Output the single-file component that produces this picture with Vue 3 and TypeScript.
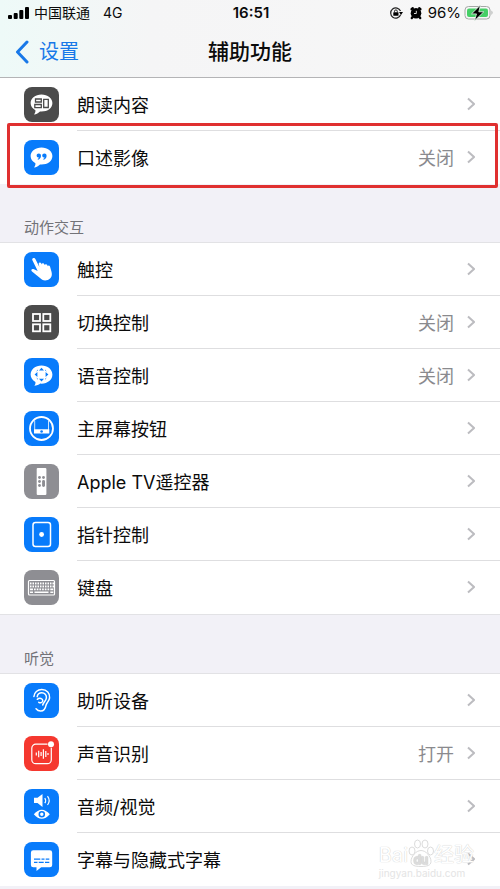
<script setup lang="ts">
type IconName =
  | 'speech' | 'quote' | 'touch' | 'switch' | 'voice' | 'home' | 'remote'
  | 'pointer' | 'keyboard' | 'ear' | 'sound' | 'av' | 'caption'

interface Item {
  label: string
  icon: IconName
  tone: 'blue' | 'dark' | 'gray' | 'red'
  value?: string
  marked?: boolean
}

interface Group {
  title?: string
  items: Item[]
}

const groups: Group[] = [
  {
    items: [
      { label: '朗读内容', icon: 'speech', tone: 'dark' },
      { label: '口述影像', icon: 'quote', tone: 'blue', value: '关闭', marked: true },
    ],
  },
  {
    title: '动作交互',
    items: [
      { label: '触控', icon: 'touch', tone: 'blue' },
      { label: '切换控制', icon: 'switch', tone: 'dark', value: '关闭' },
      { label: '语音控制', icon: 'voice', tone: 'blue', value: '关闭' },
      { label: '主屏幕按钮', icon: 'home', tone: 'blue' },
      { label: 'Apple TV遥控器', icon: 'remote', tone: 'gray' },
      { label: '指针控制', icon: 'pointer', tone: 'blue' },
      { label: '键盘', icon: 'keyboard', tone: 'gray' },
    ],
  },
  {
    title: '听觉',
    items: [
      { label: '助听设备', icon: 'ear', tone: 'blue' },
      { label: '声音识别', icon: 'sound', tone: 'red', value: '打开' },
      { label: '音频/视觉', icon: 'av', tone: 'blue' },
      { label: '字幕与隐藏式字幕', icon: 'caption', tone: 'blue' },
    ],
  },
]

const keyColumns: number[] = [6, 8.5, 11, 13.5, 16, 18.5, 21, 23.5, 26, 28.5]
</script>

<template>
  <div class="screen">
    <header class="top">
      <div class="status">
        <div class="status-side">
          <svg class="signal" viewBox="0 0 22 14" aria-hidden="true">
            <rect x="0" y="9" width="4" height="4" rx="1" />
            <rect x="5.700" y="7" width="4" height="6" rx="1" />
            <rect x="11.300" y="4" width="4" height="9" rx="1" />
            <rect x="17" y="1" width="4" height="12" rx="1" />
          </svg>
          <span class="carrier">中国联通</span>
          <span>4G</span>
        </div>
        <time class="clock">16:51</time>
        <div class="status-side status-right">
          <svg class="lock" viewBox="0 0 14 14" aria-hidden="true">
            <path d="M11.600 8.800A5.100 5.100 0 1 1 11.500 5" fill="none" stroke="#222" stroke-width="1.200" />
            <path d="M10 6h4L12 8.900z" />
            <rect x="4.300" y="6.300" width="5.200" height="3.500" rx=".5" />
            <path d="M5.500 6.500V5.300a1.400 1.400 0 0 1 2.800 0v1.200" fill="none" stroke="#222" stroke-width="1" />
          </svg>
          <svg class="alarm" viewBox="0 0 14 14" aria-hidden="true">
            <circle cx="7" cy="7.200" r="5.300" />
            <path d="M2.600 3.200 3.800 2.200M11.400 3.200 10.200 2.200M3.600 11l-.8 1M10.400 11l.8 1" stroke="#000" stroke-width="2.400" stroke-linecap="round" />
            <path d="M7.300 4.800v2.700H5" fill="none" stroke="#d8d8d8" stroke-width="1" />
          </svg>
          <span class="percent">96%</span>
          <svg class="battery" viewBox="0 0 30 16" aria-hidden="true">
            <rect x="1" y="1.500" width="25" height="12.500" rx="3.500" fill="none" stroke="#a5a8a6" />
            <rect x="3" y="3.500" width="21" height="8.500" rx="2" fill="#45cf66" />
            <path d="M27.500 5.500q2 2 0 4.500z" fill="#a5a8a6" />
            <path d="M16.500 0 7.500 8.900h5L10.500 15.800 19.800 6.800h-5z" fill="#000" stroke="#e9f7ec" stroke-width=".8" />
          </svg>
        </div>
      </div>
      <nav class="nav">
        <a class="back" href="#">
          <svg viewBox="0 0 14 24" aria-hidden="true"><path d="M12 2 2.500 12 12 22" /></svg>
          <span>设置</span>
        </a>
        <h1>辅助功能</h1>
      </nav>
    </header>

    <main>
      <section v-for="(group, g) in groups" :key="g" class="section">
        <h2 v-if="group.title">{{ group.title }}</h2>
        <ul>
          <li v-for="item in group.items" :key="item.label" :class="{ marked: item.marked }">
            <a class="row" href="#">
              <svg class="icon" :class="item.tone" viewBox="0 0 35 35" aria-hidden="true">
                <g v-if="item.icon === 'speech'">
                  <path class="fill" d="M17.500 7.500c6.200 0 10.900 3.600 10.900 8.600s-4.700 8.500-10.900 8.500l-1.500-.1c-1.400 1.600-3.600 2.800-6 2.900 1-1.100 1.600-2.500 1.400-4.200-2.900-1.500-4.800-4-4.800-7.100 0-5 4.700-8.600 10.900-8.600z" />
                  <path class="cut" d="M11.500 12h5.800v3h-5.800zM10.800 17.500h6.500v3.200h-6.500zM19.700 12.300h4.600v8.200h-4.600z" />
                </g>
                <g v-else-if="item.icon === 'quote'">
                  <path class="fill" d="M17.500 7.500c6.200 0 10.900 3.600 10.900 8.600s-4.700 8.500-10.900 8.500l-1.500-.1c-1.400 1.600-3.600 2.800-6 2.900 1-1.100 1.600-2.500 1.400-4.200-2.900-1.500-4.800-4-4.800-7.100 0-5 4.700-8.600 10.900-8.600z" />
                  <path class="ink" d="M14.800 13.500a2.200 2.200 0 0 1 2.200 2.300c0 2-1.200 3.500-3 4l-.4-.9c.9-.4 1.300-.9 1.400-1.500a2 2 0 0 1-2.400-1.900c0-1.100 1-2 2.200-2zM20.400 13.500a2.200 2.200 0 0 1 2.200 2.300c0 2-1.200 3.500-3 4l-.4-.9c.9-.4 1.300-.9 1.400-1.500a2 2 0 0 1-2.400-1.900c0-1.100 1-2 2.200-2z" />
                </g>
                <g v-else-if="item.icon === 'touch'">
                  <path class="fill" d="M9 6.200c.9-.5 2 0 2.500 1l3.900 7.900-.7-3.200c-.1-1.600 1.900-2 2.500-.6l.5 1.200c0-1.600 2.200-1.800 2.700-.3l.4 1.100c.1-1.400 2-1.500 2.500-.2l.4 1.200c.3-1.200 1.900-1.200 2.300.1l1.500 5.400c1.100 4.200-.6 7.200-3.800 8.200-3.300 1-5.800.1-8-2.200l-7.700-6.400c-1.400-1.300-.3-2.900 1.400-2.400l4.300 1.900-5.300-10.600c-.4-.9-.1-1.700.6-2.100z" />
                </g>
                <g v-else-if="item.icon === 'switch'" class="line">
                  <rect x="9" y="9" width="7" height="7" /><rect x="19.300" y="9" width="7" height="7" />
                  <rect x="9" y="19.300" width="7" height="7" /><rect x="19.300" y="19.300" width="7" height="7" />
                </g>
                <g v-else-if="item.icon === 'voice'">
                  <path class="fill" d="M17.500 7.500c6.200 0 10.900 3.800 10.900 9.100s-4.700 9.100-10.900 9.100l-1.300-.1c-1.500 1.300-3.600 2.100-5.900 2.200.9-1.100 1.400-2.400 1.100-3.900-2.900-1.500-4.800-4.200-4.800-7.300 0-5.300 4.700-9.100 10.900-9.100z" />
                  <path class="ink" d="m17.500 9.700 2.500 2.800h-5zM17.500 23.500l2.500-2.800h-5zM10.600 16.600l2.800-2.500v5zM24.400 16.600l-2.800-2.500v5z" />
                  <path class="arc" d="M12.700 13.100l1.300-1.200M22.300 13.100l-1.300-1.200M12.700 20.100l1.300 1.200M22.300 20.100l-1.300 1.200" />
                </g>
                <g v-else-if="item.icon === 'home'">
                  <circle class="line" cx="17.500" cy="17.500" r="11.500" />
                  <path class="fill" d="M10 18.200h15.300v4.300H10z" />
                  <path class="thin" d="M10.700 9.500V19M24.500 9.500V19" />
                  <circle class="ink" cx="17.600" cy="20.500" r="1.300" />
                </g>
                <g v-else-if="item.icon === 'remote'">
                  <rect class="fill" x="12.700" y="4" width="9.700" height="27" rx="1" />
                  <g class="ink"><circle cx="15.500" cy="13.500" r="1.400" /><circle cx="19.500" cy="13.500" r="1.400" />
                    <circle cx="15.500" cy="17.500" r="1.400" /><circle cx="15.500" cy="21.500" r="1.400" />
                    <rect x="18.100" y="16" width="2.900" height="6.900" rx="1.400" /></g>
                </g>
                <g v-else-if="item.icon === 'pointer'">
                  <rect class="frame" x="9" y="5.500" width="17.500" height="24" rx="2.500" />
                  <circle class="fill" cx="17.600" cy="17.500" r="2.400" />
                </g>
                <g v-else-if="item.icon === 'keyboard'">
                  <rect class="hair" x="4.500" y="10.500" width="26" height="14.500" rx="1" />
                  <rect v-for="x in keyColumns" :key="x" class="fill" :x="x" y="12.500" width="1.500" height="1.900" />
                  <rect v-for="x in keyColumns" :key="x + 40" class="fill" :x="x" y="15.500" width="1.500" height="1.900" />
                  <path class="fill" d="M6 18.500h3v1.700H6zM10 18.500h1.700v1.700H10zM12.700 18.500h1.700v1.700h-1.700zM15.400 18.500h1.700v1.700h-1.700zM18.100 18.500h1.700v1.700h-1.700zM20.800 18.500h1.700v1.700h-1.700zM23.500 18.500h1.700v1.700h-1.700zM26.300 18.500h3v1.700h-3zM6 21.600h3V23H6zM10.500 21.600h14V23h-14zM26.300 21.600h3V23h-3z" />
                </g>
                <g v-else-if="item.icon === 'ear'" class="line ear">
                  <path d="M9.900 13.500C10.200 9.500 13.500 6.500 17.800 6.500c5 0 8.300 3.600 7.800 8.300-.4 3.400-2.900 4.700-3.600 7.500-.6 3.200-2 5.800-5.500 5.700-1.900 0-3.400-1-4.400-2.300" />
                  <path d="M13.200 13.700c.4-2.300 2.300-3.900 4.600-3.900 2.900 0 4.800 2.100 4.600 4.900-.3 3.300-3 4.300-3.700 7.300" />
                  <path d="M13.300 16.300c2.300-1.900 5.600-.8 5.500 1.500-.1 1.900-2.600 2.500-4 1.500" />
                </g>
                <g v-else-if="item.icon === 'sound'">
                  <path class="hair" d="M23.500 8.200H11.800a4 4 0 0 0-4 4v11.500a4 4 0 0 0 4 4h11.500a4 4 0 0 0 4-4V11.800" />
                  <path class="hair" d="M12.300 16.600v2.800M14.700 14.700v6.600M17.100 16v4M19.400 13.300v9.400M21.800 15v6M24 17v2" />
                  <circle class="fill" cx="27" cy="8.300" r="3" />
                </g>
                <g v-else-if="item.icon === 'av'">
                  <path class="fill" d="M10 8.700h3.500L18.500 5v13l-5-3.900H10z" />
                  <path class="hair" d="M20.800 9q1.700 2.600 0 5.200M23.500 7.200q3.300 4.400 0 8.800" />
                  <path class="fill" d="M9.800 25.300q8-9.200 16 0-8 9-16 0z" />
                  <circle class="ring" cx="17.800" cy="25.300" r="2.500" />
                </g>
                <g v-else>
                  <path class="fill" d="M9.300 8.300h16.500a2.400 2.400 0 0 1 2.400 2.400v12.200a2.400 2.400 0 0 1-2.400 2.400h-8.600l-4.700 3.800v-3.800H9.300a2.400 2.400 0 0 1-2.400-2.400V10.700a2.400 2.400 0 0 1 2.400-2.400z" />
                  <path class="cut" d="M10 17.200h6.300M17.500 17.200h3M21.700 17.200h3.600M10 20.300h3.500M14.700 20.300h5M21 20.300h4.300" />
                </g>
              </svg>
              <span class="content">
                <span class="label">{{ item.label }}</span>
                <span v-if="item.value" class="value">{{ item.value }}</span>
                <svg class="chevron" viewBox="0 0 8 14" aria-hidden="true"><path d="m1 1.500 6 5.500-6 5.500" /></svg>
              </span>
            </a>
          </li>
        </ul>
      </section>
    </main>

    <div class="watermark">
      <div class="brand">
        <span>Bai</span>
        <svg viewBox="0 0 26 28" aria-hidden="true">
          <ellipse cx="4" cy="12" rx="3" ry="4" /><ellipse cx="9.500" cy="5" rx="3" ry="4" />
          <ellipse cx="17" cy="5" rx="3" ry="4" /><ellipse cx="22.500" cy="12" rx="3" ry="4" />
          <path d="M13 11.500c5 0 10 6 10 11 0 4-4 5-10 5s-10-1-10-5c0-5 5-11 10-11z" />
          <text x="13" y="25" text-anchor="middle">du</text>
        </svg>
        <span>经验</span>
      </div>
      <small>jingyan.baidu.com</small>
    </div>
  </div>
</template>

<style>
body {
  margin: 0;
  background: #f2f1f7;
}
</style>

<style scoped>
.screen {
  position: relative;
  padding-bottom: 3px;
  background: #f2f1f7;
  color: #0b0b0b;
  font-family: Inter, "Noto Sans CJK SC", sans-serif;
}
.top {
  box-sizing: border-box;
  height: 78px;
  border-bottom: 1px solid #b4b4b6;
  background: linear-gradient(90deg, #eefaf8, #f5f5f6 30%, #f7f7f7);
}
.status {
  display: grid;
  grid-template-columns: 1fr auto 1fr;
  align-items: center;
  height: 26px;
  padding: 0 6px 0 8px;
  font-size: 14px;
  line-height: 20px;
}
.status-side {
  display: flex;
  align-items: center;
}
.status-right {
  justify-content: flex-end;
}
.signal {
  width: 22px;
  height: 14px;
  margin-right: 4px;
}
.carrier {
  margin-right: 13px;
}
.clock {
  font-size: 15px;
  font-weight: 600;
}
.lock,
.alarm {
  width: 14px;
  height: 14px;
  margin-right: 6px;
}
.alarm {
  margin-right: 5px;
}
.percent {
  font-size: 15px;
}
.battery {
  width: 30px;
  height: 16px;
  margin-left: 3px;
}
.nav {
  display: grid;
  grid-template-columns: 1fr auto 1fr;
  align-items: center;
  height: 51px;
  padding: 0 15px;
}
.back {
  display: flex;
  align-items: center;
  gap: 10px;
  color: #1878e8;
  font-size: 20px;
  line-height: 28px;
  text-decoration: none;
}
.back svg {
  width: 14px;
  height: 24px;
  fill: none;
  stroke: #1878e8;
  stroke-width: 3;
  stroke-linecap: round;
  stroke-linejoin: round;
}
h1 {
  margin: 0;
  font-size: 21px;
  font-weight: 500;
  line-height: 30px;
}
h2 {
  box-sizing: border-box;
  height: 59px;
  margin: 0;
  padding: 33px 24px 0;
  border-bottom: 1px solid #e2e2e5;
  color: #737378;
  font-size: 15px;
  font-weight: 400;
  line-height: 22px;
}
ul {
  margin: 0;
  padding: 0;
  background: #fff;
  list-style: none;
}
.section:nth-child(2) ul {
  border-bottom: 1px solid #e2e2e5;
}
li {
  position: relative;
}
.row {
  display: flex;
  align-items: center;
  gap: 18px;
  height: 53px;
  padding-left: 24px;
  color: inherit;
  text-decoration: none;
}
.content {
  box-sizing: border-box;
  display: flex;
  flex: 1;
  align-items: center;
  height: 53px;
  padding-right: 25px;
  border-bottom: 1px solid #dedee0;
  font-size: 18px;
  line-height: 26px;
}
li:last-child .content {
  border-bottom-color: transparent;
}
.label,
.value {
  padding-top: 3px;
}
.label {
  flex: 1;
}
.value {
  margin-right: 13px;
  color: #8a8a8e;
}
.chevron {
  width: 8px;
  height: 14px;
  fill: none;
  stroke: #bcbcc0;
  stroke-width: 2;
}
.marked::after {
  position: absolute;
  inset: -8px 2px -4px 7px;
  border: 3px solid #e03030;
  border-radius: 2px;
  content: "";
  pointer-events: none;
}
.icon {
  flex: none;
  width: 35px;
  height: 35px;
  border-radius: 8px;
  background: var(--tone);
}
.blue { --tone: #087bfb; }
.dark { --tone: #4b4b4b; }
.gray { --tone: #8e8e93; }
.red { --tone: #f5382f; }
.fill { fill: #fff; }
.ink { fill: var(--tone); }
.line,
.hair,
.thin,
.frame {
  fill: none;
  stroke: #fff;
  stroke-width: 1.8;
}
.frame { stroke-width: 1.5; }
.hair { stroke-width: 1.2; }
.thin { stroke-width: 0.8; }
.ear {
  stroke-width: 1.5;
  stroke-linecap: round;
}
.cut,
.arc {
  fill: none;
  stroke: var(--tone);
  stroke-width: 1.3;
}
.arc { stroke-width: 0.7; }
.ring {
  fill: #fff;
  stroke: var(--tone);
  stroke-width: 1.6;
}
.watermark {
  position: absolute;
  right: 26px;
  bottom: 10px;
  color: #fff;
  text-shadow: 0 0 1px #ccc, 0 0 1px #ddd;
}
.brand {
  display: flex;
  align-items: flex-end;
  font-size: 20px;
  line-height: 24px;
}
.brand svg {
  width: 26px;
  height: 28px;
  fill: #fff;
  stroke: #dcdcdc;
  stroke-width: 1;
}
.brand text {
  font-size: 12px;
}
.watermark small {
  display: block;
  color: #e4e4e4;
  font-size: 10px;
  line-height: 12px;
  text-shadow: none;
}
</style>
